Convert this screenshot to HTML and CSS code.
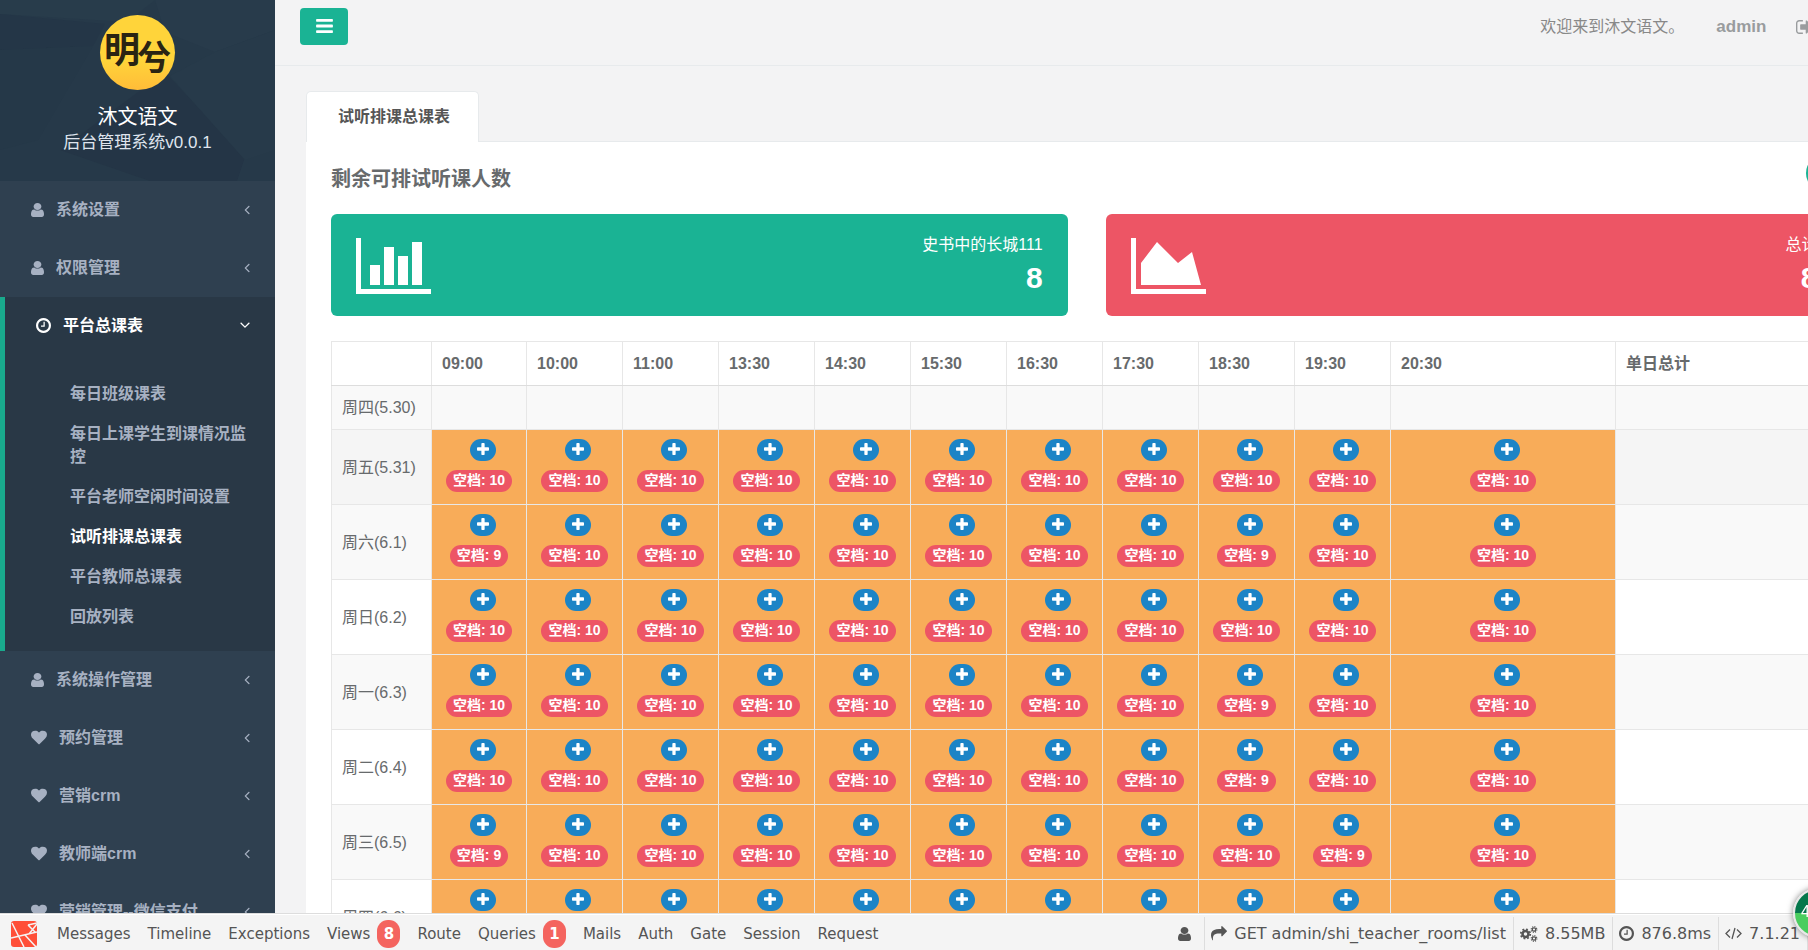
FILE: index.html
```html
<!DOCTYPE html>
<html lang="zh-CN">
<head>
<meta charset="utf-8">
<title>试听排课总课表</title>
<link rel="stylesheet" href="styles.css">
</head>
<body>
<svg class="sprite" aria-hidden="true">
  <symbol id="i-user" viewBox="256 128 1280 1536" preserveAspectRatio="none"><path d="M1536 1399q0 109-62.5 187t-150.5 78h-854q-88 0-150.5-78t-62.5-187q0-85 8.5-160.5t31.5-152 58.5-131 94-89 134.500-34.500q131 128 313 128t313-128q76 0 134.500 34.500t94 89 58.500 131 31.500 152 8.500 160.500zm-256-887q0 159-112.500 271.500t-271.500 112.500-271.500-112.500-112.500-271.500 112.500-271.500 271.500-112.500 271.500 112.500 112.500 271.500z"/></symbol>
  <symbol id="i-heart" viewBox="0 128 1792 1536"><path d="M896 1664q-26 0-44-18l-624-602q-10-8-27.5-26t-55.5-65.5-68-97.5-53.5-121-23.500-138q0-220 127-344t351-124q62 0 126.500 21.500t120 58 95.500 68.500 76 68q36-36 76-68t95.500-68.500 120-58 126.500-21.500q224 0 351 124t127 344q0 221-229 450l-623 600q-18 18-44 18z"/></symbol>
  <symbol id="i-clock" viewBox="128 128 1536 1536"><path d="M1024 544v448q0 14-9 23t-23 9h-320q-14 0-23-9t-9-23v-64q0-14 9-23t23-9h224v-352q0-14 9-23t23-9h64q14 0 23 9t9 23zm416 352q0-148-73-273t-198-198-273-73-273 73-198 198-73 273 73 273 198 198 273 73 273-73 198-198 73-273zm224 0q0 209-103 385.500t-279.500 279.500-385.500 103-385.500-103-279.500-279.500-103-385.500 103-385.500 279.500-279.500 385.500-103 385.500 103 279.500 279.500 103 385.500z"/></symbol>
  <symbol id="i-left" viewBox="544 426 704 1068"><path d="M1203 544q0 13-10 23l-393 393 393 393q10 10 10 23t-10 23l-50 50q-10 10-23 10t-23-10l-466-466q-10-10-10-23t10-23l466-466q10-10 23-10t23 10l50 50q10 10 10 23z"/></symbol>
  <symbol id="i-down" viewBox="362 620 1068 704"><path d="M1395 736q0 13-10 23l-466 466q-10 10-23 10t-23-10l-466-466q-10-10-10-23t10-23l50-50q10-10 23-10t23 10l393 393 393-393q10-10 23-10t23 10l50 50q10 10 10 23z"/></symbol>
  <symbol id="i-plus" viewBox="192 128 1408 1408"><path d="M1600 736v192q0 40-28 68t-68 28h-416v416q0 40-28 68t-68 28h-192q-40 0-68-28t-28-68v-416h-416q-40 0-68-28t-28-68v-192q0-40 28-68t68-28h416v-416q0-40 28-68t68-28h192q40 0 68 28t28 68v416h416q40 0 68 28t28 68z"/></symbol>
  <symbol id="i-bars" viewBox="128 256 1536 1280"><path d="M1664 1344v128q0 26-19 45t-45 19h-1408q-26 0-45-19t-19-45v-128q0-26 19-45t45-19h1408q26 0 45 19t19 45zm0-512v128q0 26-19 45t-45 19h-1408q-26 0-45-19t-19-45v-128q0-26 19-45t45-19h1408q26 0 45 19t19 45zm0-512v128q0 26-19 45t-45 19h-1408q-26 0-45-19t-19-45v-128q0-26 19-45t45-19h1408q26 0 45 19t19 45z"/></symbol>
  <symbol id="i-share" viewBox="0 128 1792 1536"><path d="M1792 640q0 26-19 45l-512 512q-19 19-45 19t-45-19-19-45v-256h-224q-98 0-175.500 6t-154 21.500-133 42.500-105.500 69.500-80 101-48.500 138.500-17.500 181q0 55 5 123 0 6 2.500 23.500t2.500 26.500q0 15-8.500 25t-23.500 10q-16 0-28-17-7-9-13-22t-13.500-30-10.500-24q-127-285-127-451 0-199 53-333 162-403 875-403h224v-256q0-26 19-45t45-19 45 19l512 512q19 19 19 45z"/></symbol>
  <symbol id="i-out" viewBox="64 256 1568 1280"><path d="M704 1440q0 4 1 20t.5 26.500-3 23.500-10 19.500-20.500 6.500h-320q-119 0-203.500-84.500t-84.500-203.500v-704q0-119 84.500-203.500t203.500-84.500h320q13 0 22.500 9.500t9.500 22.500q0 4 1 20t.5 26.500-3 23.500-10 19.500-20.500 6.500h-320q-66 0-113 47t-47 113v704q0 66 47 113t113 47h312l11.500 1 11.500 3 8 5.500 7 9 2 13.500zm928-544q0 26-19 45l-544 544q-19 19-45 19t-45-19-19-45v-288h-448q-26 0-45-19t-19-45v-384q0-26 19-45t45-19h448v-288q0-26 19-45t45-19 45 19l544 544q19 19 19 45z"/></symbol>
  <symbol id="i-cogs" viewBox="0 0 36 32"><g fill="none" stroke="currentColor"><circle cx="11" cy="16" r="6" stroke-width="5"/><circle cx="11" cy="16" r="9.500" stroke-width="3.500" stroke-dasharray="3.730 3.730"/><circle cx="28" cy="7" r="3.400" stroke-width="2.600"/><circle cx="28" cy="7" r="5.600" stroke-width="2.400" stroke-dasharray="2.200 2.200"/><circle cx="28" cy="25" r="3.400" stroke-width="2.600"/><circle cx="28" cy="25" r="5.600" stroke-width="2.400" stroke-dasharray="2.200 2.200"/></g></symbol>
  <symbol id="i-code" viewBox="0 0 34 26"><path d="M10 5 2 13l8 8M24 5l8 8-8 8M20 2l-6 22" fill="none" stroke="currentColor" stroke-width="2.600"/></symbol>
</svg>

<div class="viewport">
<div class="shell">
  <nav class="sidebar">
    <div class="profile">
      <svg class="facets" viewBox="0 0 275 181" preserveAspectRatio="none" aria-hidden="true">
        <path fill="#283c4b" d="M0 0h155l-28 22L0 14z"/>
        <path fill="#243647" d="M0 14l105 10-12 22L0 50z"/>
        <path fill="#253848" d="M93 46 38 140 0 150V50z"/>
        <path fill="#283b4b" d="M155 0h120v30l-60 22-50-20z"/>
        <path fill="#243546" d="M165 72l80 85-8 24H150L60 150z"/>
        <path fill="#273a4a" d="M275 30v120l-30 10-75-84 45-24z"/>
      </svg>
      <div class="avatar"><span class="mark-a">明</span><span class="mark-b">兮</span></div>
      <strong class="brand">沐文语文</strong>
      <span class="version">后台管理系统v0.0.1</span>
    </div>
    <ul class="menu">
      <li><a href="#"><svg class="ico-user"><use href="#i-user"/></svg><span>系统设置</span><svg class="ico-left"><use href="#i-left"/></svg></a></li>
      <li><a href="#"><svg class="ico-user"><use href="#i-user"/></svg><span>权限管理</span><svg class="ico-left"><use href="#i-left"/></svg></a></li>
      <li class="active">
        <a href="#"><svg class="ico-clock"><use href="#i-clock"/></svg><span>平台总课表</span><svg class="ico-down"><use href="#i-down"/></svg></a>
        <ul class="submenu">
          <li><a href="#">每日班级课表</a></li>
          <li><a href="#">每日上课学生到课情况监控</a></li>
          <li><a href="#">平台老师空闲时间设置</a></li>
          <li><a href="#" class="current">试听排课总课表</a></li>
          <li><a href="#">平台教师总课表</a></li>
          <li><a href="#">回放列表</a></li>
        </ul>
      </li>
      <li><a href="#"><svg class="ico-user"><use href="#i-user"/></svg><span>系统操作管理</span><svg class="ico-left"><use href="#i-left"/></svg></a></li>
      <li><a href="#"><svg class="ico-heart"><use href="#i-heart"/></svg><span>预约管理</span><svg class="ico-left"><use href="#i-left"/></svg></a></li>
      <li><a href="#"><svg class="ico-heart"><use href="#i-heart"/></svg><span>营销crm</span><svg class="ico-left"><use href="#i-left"/></svg></a></li>
      <li><a href="#"><svg class="ico-heart"><use href="#i-heart"/></svg><span>教师端crm</span><svg class="ico-left"><use href="#i-left"/></svg></a></li>
      <li><a href="#"><svg class="ico-heart"><use href="#i-heart"/></svg><span>营销管理--微信支付</span><svg class="ico-left"><use href="#i-left"/></svg></a></li>
    </ul>
  </nav>

  <main class="page">
    <header class="topbar">
      <button class="toggle" type="button" aria-label="菜单"><svg><use href="#i-bars"/></svg></button>
      <div class="account">
        <span class="welcome">欢迎来到沐文语文。</span>
        <a class="who" href="#">admin</a>
        <a class="logout" href="#" aria-label="退出"><svg><use href="#i-out"/></svg></a>
      </div>
    </header>

    <section class="content">
      <div class="tabs"><a class="tab" href="#">试听排课总课表</a></div>
      <div class="panel">
        <div class="panel-head">
          <h1>剩余可排试听课人数</h1>
          <button class="round" type="button" aria-label="刷新"></button>
        </div>
        <div class="widgets">
          <div class="widget green">
            <svg class="chart" viewBox="0 0 75 56"><path d="M0 0h5v51h70v5H0zM14 27h10v20H14zM28 9h10v38H28zM42 18h10v29H42zM56 4h10v43H56z"/></svg>
            <div class="figures"><span>史书中的长城111</span><strong>8</strong></div>
          </div>
          <div class="widget red">
            <svg class="chart" viewBox="0 0 75 56"><path d="M0 0h5v51h70v5H0zM10 25 26 4l21 21 14-11 9 33H10z"/></svg>
            <div class="figures"><span>总计</span><strong>8</strong></div>
          </div>
        </div>
        <table class="schedule">
          <colgroup><col class="c-day"><col class="c-first"><col span="9" class="c-slot"><col class="c-last"><col></colgroup>
          <thead><tr><th></th><th>09:00</th><th>10:00</th><th>11:00</th><th>13:30</th><th>14:30</th><th>15:30</th><th>16:30</th><th>17:30</th><th>18:30</th><th>19:30</th><th>20:30</th><th>单日总计</th></tr></thead>
          <tbody id="rows"></tbody>
        </table>
      </div>
    </section>
  </main>
</div>
</div>

<footer class="debugbar">
  <svg class="laravel" viewBox="0 0 26 26" aria-hidden="true"><rect width="26" height="26" rx="3" fill="#ff4f38"/><path d="M1 2l12 24M0 17l26-6M14 14l11 12M17 4l9-2M17 4l7 7M18 13l8-10" fill="none" stroke="#f4f4f4" stroke-width="1.500"/></svg>
  <a href="#">Messages</a>
  <a href="#">Timeline</a>
  <a href="#">Exceptions</a>
  <a href="#">Views<b>8</b></a>
  <a href="#">Route</a>
  <a href="#">Queries<b>1</b></a>
  <a href="#">Mails</a>
  <a href="#">Auth</a>
  <a href="#">Gate</a>
  <a href="#">Session</a>
  <a href="#">Request</a>
  <div class="stats">
    <span><svg class="ico-user"><use href="#i-user"/></svg></span>
    <span><svg class="ico-heart"><use href="#i-share"/></svg>GET admin/shi_teacher_rooms/list</span>
    <span><svg class="ico-cogs"><use href="#i-cogs"/></svg>8.55MB</span>
    <span><svg class="ico-clock"><use href="#i-clock"/></svg>876.8ms</span>
    <span><svg class="ico-code"><use href="#i-code"/></svg>7.1.21</span>
  </div>
</footer>
<div class="meter">4</div>
<script src="app.js"></script>
</body>
</html>
```
FILE: styles.css
```css
* { box-sizing: border-box; }
body {
  margin: 0;
  height: 100vh;
  display: flex;
  flex-direction: column;
  overflow: hidden;
  background: #f3f3f4;
  color: #676a6c;
  font: 16px/23px "Liberation Sans", "Noto Sans CJK SC", sans-serif;
}
a { color: inherit; text-decoration: none; }
ul { margin: 0; padding: 0; list-style: none; }
svg { fill: currentColor; flex: none; }
.sprite { position: absolute; width: 0; height: 0; }
.viewport { flex: 1; min-height: 0; overflow: hidden; }
.shell { display: flex; width: 105%; }

.ico-user { width: 13px; height: 14px; }
.ico-heart { width: 16px; height: 15px; }
.ico-clock { width: 15px; height: 15px; }
.ico-cogs { width: 18px; height: 16px; }
.ico-code { width: 17px; height: 13px; }
.ico-left { width: 6px; height: 10px; }
.ico-down { width: 10px; height: 7px; }

.sidebar { flex: none; width: 275px; background: #2f4050; color: #a7b1c2; }
.profile {
  position: relative;
  display: flex;
  flex-direction: column;
  align-items: center;
  height: 181px;
  padding-top: 15px;
  background: #263949;
}
.facets { position: absolute; inset: 0; width: 100%; height: 100%; }
.avatar {
  position: relative;
  width: 75px;
  height: 75px;
  margin-bottom: 14px;
  border-radius: 50%;
  background: linear-gradient(#ffd43a 60%, #ffbc38);
  color: #2a2413;
  font-weight: bold;
}
.mark-a, .mark-b { position: absolute; }
.mark-a { left: 4px; top: 18px; font-size: 36px; line-height: 36px; }
.mark-b { left: 37px; top: 26px; font-size: 34px; line-height: 34px; }
.brand { position: relative; color: #fff; font-size: 20px; line-height: 26px; font-weight: normal; }
.version { position: relative; color: #dfe4ed; font-size: 17px; line-height: 26px; }

.menu > li > a { display: flex; align-items: center; gap: 12px; height: 58px; padding: 0 25px 1px 31px; font-weight: bold; }
.menu > li > a span { flex: 1; }
.menu > .active { border-left: 5px solid #19aa8d; background: #293846; }
.menu > .active > a { color: #fff; }
.submenu { padding: 18px 0 15px; }
.submenu a { display: block; padding: 9px 20px 8px 65px; font-weight: bold; }
.submenu .current { color: #fff; }

.page { flex: 1; min-width: 0; }
.topbar {
  display: flex;
  justify-content: space-between;
  align-items: flex-start;
  height: 66px;
  padding: 8px 85px 0 25px;
  border-bottom: 1px solid #e7eaec;
}
.toggle { width: 48px; height: 37px; padding: 0 0 2px; border: 0; border-radius: 4px; background: #1ab394; color: #fff; }
.toggle svg { display: block; width: 17px; height: 14px; margin: 0 auto; }
.account { display: flex; align-items: center; height: 37px; color: #999c9e; }
.welcome { margin-right: 32px; color: #888888; }
.who { margin-right: 30px; font-size: 17px; font-weight: bold; }
.logout svg { display: block; width: 17px; height: 14px; }

.content { padding: 25px 31px 0; }
.tabs { display: flex; border-bottom: 1px solid #e7eaec; }
.tab {
  padding: 13px 28px 14px 31px;
  margin-bottom: -1px;
  border: 1px solid #e7eaec;
  border-bottom: 0;
  border-radius: 5px 5px 0 0;
  background: #fff;
  color: #555;
  font-weight: bold;
}
.panel { padding: 13px 25px 0; background: #fff; }
.panel-head { display: flex; justify-content: space-between; height: 59px; }
h1 { margin: 0; font-size: 20px; line-height: 48px; }
.round { width: 36px; height: 36px; border: 0; border-radius: 50%; background: #1ab394; }
.widgets { display: grid; grid-template-columns: 1fr 1fr; gap: 38px; margin-bottom: 25px; color: #fff; }
.widget { display: flex; align-items: flex-end; justify-content: space-between; height: 102px; padding: 0 25px 21px; border-radius: 6px; }
.green { background: #1ab394; }
.red { background: #ed5565; }
.chart { width: 75px; height: 56px; margin-bottom: 1px; }
.figures { display: flex; flex-direction: column; align-items: flex-end; gap: 5px; }
.figures strong { font-size: 30px; line-height: 34px; }

.schedule { width: 100%; table-layout: fixed; border-collapse: collapse; background: #fff; }
.c-day { width: 100px; }
.c-first { width: 95px; }
.c-slot { width: 96px; }
.c-last { width: 225px; }
.schedule th, .schedule td { height: 44px; padding: 0 10px; border: 1px solid #e7e7e7; text-align: left; vertical-align: middle; }
.schedule thead th { border-bottom-color: #ddd; color: #676a6c; }
.schedule tbody th { font-weight: normal; }
.schedule .tall td { height: 75px; }
.schedule tbody tr:nth-child(odd) { background: #f9f9f9; }
.schedule tbody .hover { background: #f5f5f5; }
.schedule .open { padding: 0; background: #f8ac59; }
.slot { display: flex; flex-direction: column; align-items: center; gap: 9px; padding-bottom: 3px; }
.add, .free { height: 22px; border-radius: 11px; color: #fff; }
.add { width: 26px; margin-left: 7px; padding: 0 7px 2px; border: 0; background: #1c84c6; }
.add svg { display: block; width: 12px; height: 12px; }
.free { padding: 0 7px; background: #ed5565; font-size: 14px; line-height: 21px; font-weight: bold; }

.debugbar {
  display: flex;
  align-items: center;
  gap: 17px;
  height: 37px;
  padding: 3px 0 0 11px;
  border-top: 1px solid #ddd;
  box-shadow: inset 0 1px #fff;
  background: #f4f4f4;
  color: #555;
  font: 15px/24px "DejaVu Sans", sans-serif;
  white-space: nowrap;
}
.debugbar a { display: flex; align-items: center; gap: 7px; }
.laravel { width: 26px; height: 26px; margin-right: 3px; }
.debugbar b { width: 23px; border-radius: 11px; background: #f4645f; color: #fff; line-height: 28px; text-align: center; }
.stats { display: flex; align-self: stretch; margin-left: auto; font-size: 16px; }
.stats span { display: flex; align-items: center; gap: 7px; padding: 0 7px 0 6px; border-right: 1px solid #ddd; }
.stats span:first-child { padding-right: 13px; }

.meter {
  position: fixed;
  right: -35px;
  bottom: 12px;
  width: 50px;
  height: 50px;
  padding-left: 6px;
  border: 2px solid #e8e8e8;
  border-radius: 50%;
  background: linear-gradient(#05784c 50%, #49cd5e 50%);
  box-shadow: 0 0 6px rgba(0, 0, 0, .5);
  color: #fff;
  font-size: 16px;
  line-height: 44px;
}
```
FILE: app.js
```javascript
const days = [
  { label: '周四(5.30)', slots: null },
  { label: '周五(5.31)', slots: [10, 10, 10, 10, 10, 10, 10, 10, 10, 10, 10], hover: true },
  { label: '周六(6.1)', slots: [9, 10, 10, 10, 10, 10, 10, 10, 9, 10, 10] },
  { label: '周日(6.2)', slots: [10, 10, 10, 10, 10, 10, 10, 10, 10, 10, 10] },
  { label: '周一(6.3)', slots: [10, 10, 10, 10, 10, 10, 10, 10, 9, 10, 10] },
  { label: '周二(6.4)', slots: [10, 10, 10, 10, 10, 10, 10, 10, 9, 10, 10] },
  { label: '周三(6.5)', slots: [9, 10, 10, 10, 10, 10, 10, 10, 10, 9, 10] },
  { label: '周四(6.6)', slots: [10, 10, 10, 10, 10, 10, 10, 10, 10, 10, 10] }
];

const slotCell = (n) =>
  `<td class="open"><div class="slot">
    <button class="add" type="button" aria-label="添加"><svg><use href="#i-plus"/></svg></button>
    <span class="free">空档: ${n}</span>
  </div></td>`;

document.getElementById('rows').innerHTML = days.map((day) => {
  const cells = day.slots ? day.slots.map(slotCell).join('') : '<td></td>'.repeat(11);
  const names = [day.slots ? 'tall' : '', day.hover ? 'hover' : ''].join(' ').trim();
  return `<tr class="${names}"><th scope="row">${day.label}</th>${cells}<td></td></tr>`;
}).join('');
```
